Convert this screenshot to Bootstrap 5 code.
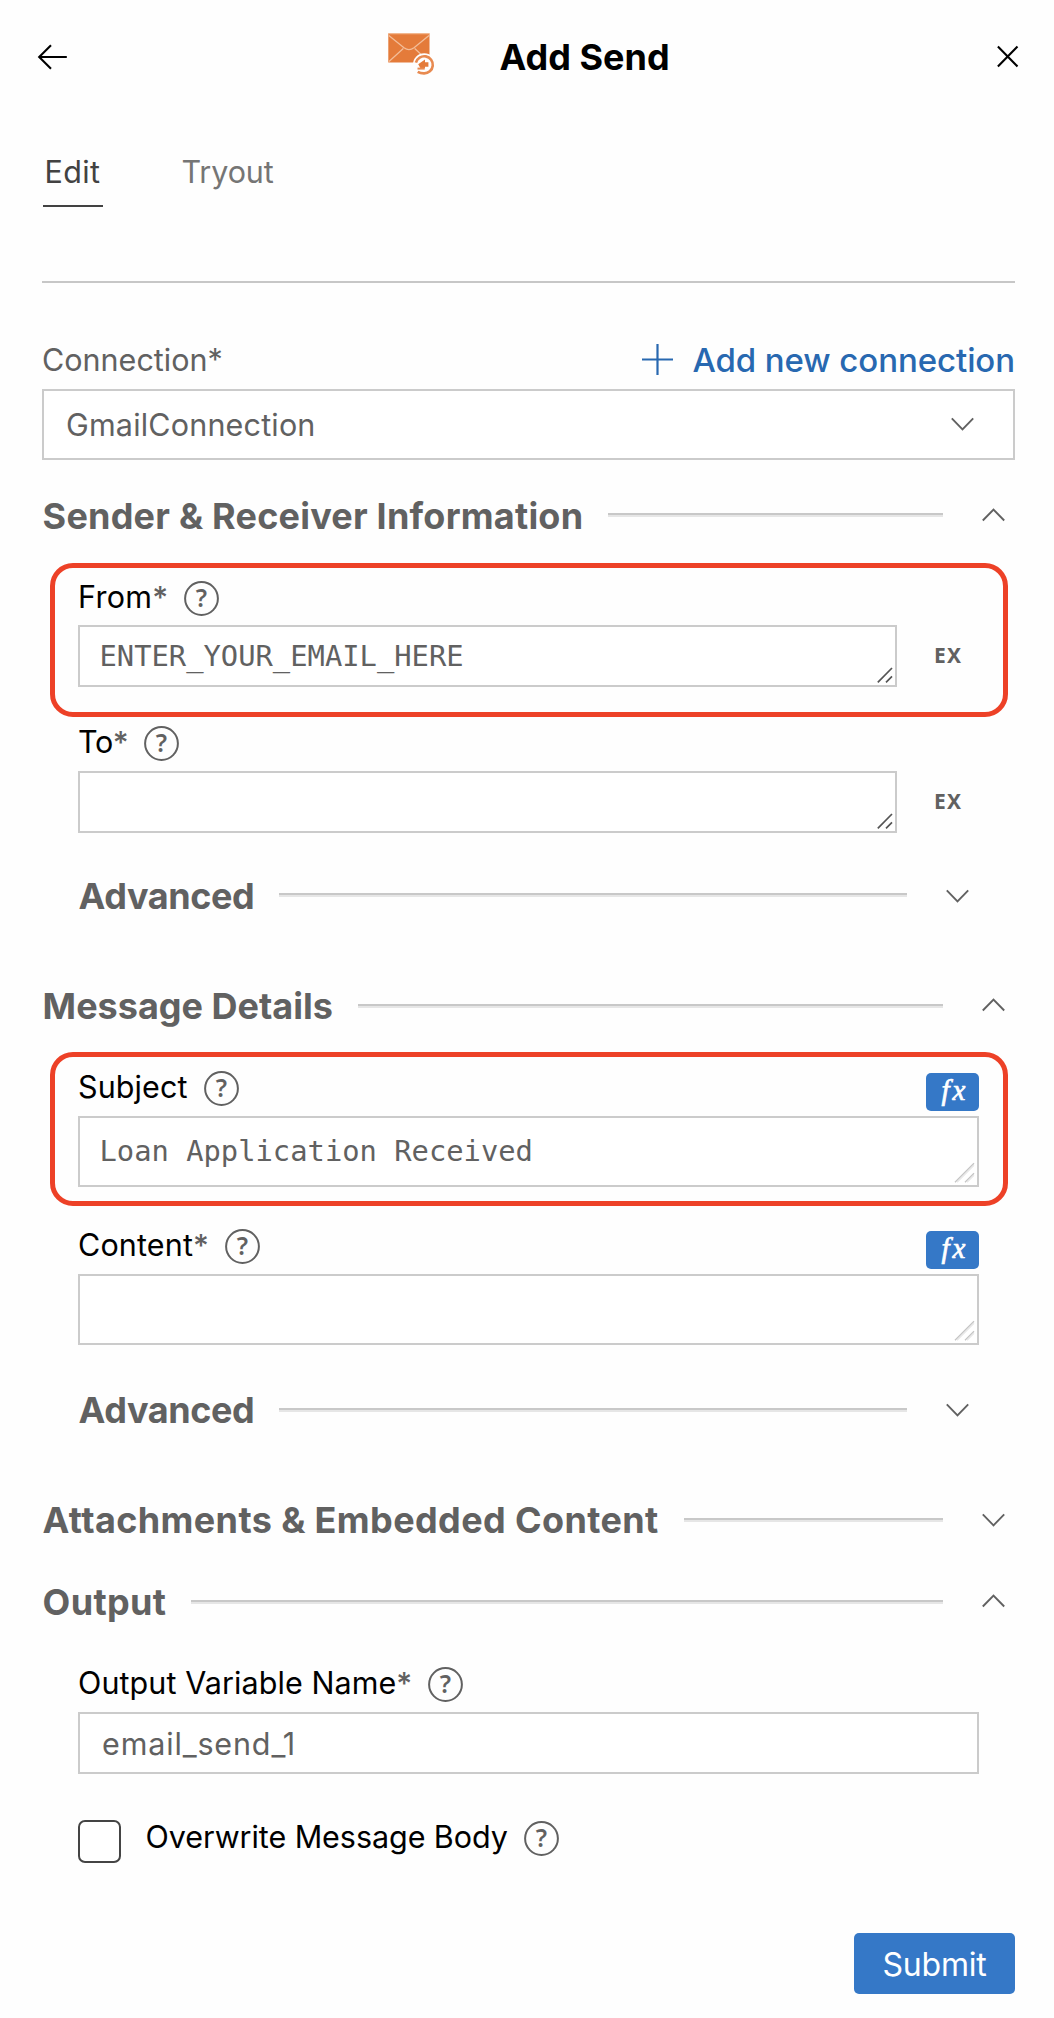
<!DOCTYPE html>
<html lang="en">
<head>
<meta charset="utf-8">
<meta name="viewport" content="width=device-width, initial-scale=1">
<title>Add Send</title>
<link href="https://cdn.jsdelivr.net/npm/bootstrap@5.3.0/dist/css/bootstrap.min.css" rel="stylesheet">
<style>
  body { font-family: Inter, "Liberation Sans", sans-serif; font-size: 30.5px; line-height: 1.2; color: #000; background: #fefefe; }
  svg { display: block; flex: none; overflow: visible; }
  .panel { width: 1054px; height: 2018px; overflow: hidden; }
  .panel-head { height: 114px; padding: 0 36px 0 38px; }
  .panel-title { font-size: 36px; font-weight: 700; margin: 0 0 0 62.5px; padding-top: 2px; }
  .brand { margin-left: 319px; margin-top: -6px; }
  .close-x { margin-bottom: 2px; }
  .tab-row { margin-top: 24px; padding-left: 43px; gap: 77px; }
  .tab-item { height: 69px; border: 0; border-bottom: 2px solid transparent; border-radius: 0; padding: 2px 1.5px 0; color: #757575; letter-spacing: -.1px; display: flex; align-items: center; }
  .tab-item.active { color: #424242; border-color: #424242; letter-spacing: .4px; padding-right: 2.5px; }
  .panel-body { padding: 0 39px 0 42px; }
  .rule { height: 2px; margin-top: 74px; background: #c7c7c7; }
  .muted { color: #616161; }
  .conn-row { height: 58px; margin-top: 48px; }
  .add-link { color: #2868b0; font-size: 33px; font-weight: 500; letter-spacing: -.08px; gap: 19px; }
  .add-link span { padding-top: 2px; }
  .add-link svg { margin-top: -2px; }
  .box { border: 2px solid #cbcbcb; border-radius: 0; background: #fff; color: #616161; height: 71px; padding: 0 22px; display: flex; align-items: center; font-size: inherit; line-height: 1.2; position: relative; }
  .box .plain { padding-top: 2px; letter-spacing: .18px; }
  .box .plain.wide { letter-spacing: .85px; }
  .box.short { height: 62px; }
  .box svg.caret { margin-right: 17px; }
  .mono { font-family: "DejaVu Sans Mono", monospace; font-size: 28.8px; padding: 0 19.5px; }
  .grip { position: absolute; right: 1px; bottom: 1px; }
  .sec { height: 60px; padding-right: 10px; }
  .sec h2 { font-size: 36px; font-weight: 700; color: #616161; margin: 0; padding: 2px 0 0 .6px; white-space: nowrap; }
  .sec .ln { height: 4px; margin: 0 39px 2px 25px; background: linear-gradient(#c8c8c8 50%, #e6e6e6 50%); }
  .sec .ln.mid { margin-bottom: 0; }
  .inner { padding: 0 36px; }
  .lbl { height: 58px; }
  .lbl .q, .check-row .q { margin-left: 16.5px; margin-top: 2px; }
  .lbl .star + .q { margin-left: 15.5px; }
  .star { color: #616161; font-weight: 500; }
  .ex { width: 82px; padding: 0 0 2px 37px; color: #616161; font: 700 21px/1 "Noto Sans", sans-serif; letter-spacing: 1.2px; }
  .fx { width: 53px; height: 38px; margin-bottom: 5px; border-radius: 5px; background: #3578c7; align-self: flex-end; }
  .marked { position: relative; }
  .marked::after { content: ""; position: absolute; top: -6px; left: -28px; width: 958px; height: 154px; border: 5px solid #ed4127; border-radius: 23px; pointer-events: none; }
  .check-row { margin-top: 46px; height: 43px; }
  .tick { width: 43px; height: 43px; border: 2px solid #444; border-radius: 7px; background: #fff; }
  .check-row .txt { margin-left: 24.5px; line-height: 34px; letter-spacing: -.06px; }
  .submit { width: 161px; height: 61px; margin-top: 70px; padding: 2px 0 0; background: #3578c7; border: 0; border-radius: 5px; color: #fff; font-size: 32px; letter-spacing: -.2px; }
</style>
</head>
<body>
<svg width="0" height="0" class="position-absolute">
  <defs>
    <symbol id="down" viewBox="0 0 23 23"><path d="M.8 5.3l10.7 11L22.2 5.3" fill="none" stroke="#616161" stroke-width="1.9"/></symbol>
    <symbol id="up" viewBox="0 0 23 23"><path d="M.8 15.5l10.7-11 10.7 11" fill="none" stroke="#616161" stroke-width="1.9"/></symbol>
    <symbol id="help" viewBox="0 0 35 35"><circle cx="17.5" cy="17.5" r="16.4" fill="none" stroke="#616161" stroke-width="2"/><text x="17.5" y="26.3" text-anchor="middle" font-family="Noto Sans, sans-serif" font-weight="600" font-size="24.5" fill="#616161">?</text></symbol>
    <symbol id="func" viewBox="0 0 53 38"><text x="15.5" y="27" font-family="Liberation Serif, serif" font-style="italic" font-size="29" letter-spacing="3" fill="#fff" stroke="#fff" stroke-width=".7">fx</text></symbol>
    <symbol id="gripdark" viewBox="0 0 17 17"><path d="M.8 15.4L15 1M9 15.4l6-6" fill="none" stroke="#555" stroke-width="1.7"/></symbol>
    <symbol id="griplight" viewBox="0 0 22 22"><path d="M1 20.2L20 1.2M11 20.2l9-9" fill="none" stroke="#c4c4c4" stroke-width="1.3"/><path d="M3 20.2l17-17M13 20.2l7-7" fill="none" stroke="#e9e9e9" stroke-width="1.4"/></symbol>
  </defs>
</svg>
<main class="panel">
  <header class="panel-head d-flex align-items-center">
    <svg width="30" height="26" viewBox="0 0 30 26"><path d="M28.8 13H1.3M13 1.2L1.2 13 13 24.8" fill="none" stroke="#000" stroke-width="2.1"/></svg>
    <svg class="brand" width="50" height="50" viewBox="0 0 50 50">
      <path d="M1.3 4.4h41.2v29H1.3z" fill="#e47b3a"/>
      <path d="M1.3 4.6h41.2" stroke="#f2b78f" stroke-width="1.4"/>
      <path d="M1.8 6.5L17 18.8q5 3.6 10 0L42 6.5M2 32.5L16.3 19.5M40 31L27.7 19.5" fill="none" stroke="#f3bd98" stroke-width="1.3"/>
      <circle cx="37.2" cy="35.4" r="11.2" fill="#fefefe"/>
      <path d="M28.9 33.6a8.6 8.6 0 1 1 8 10.8c-2.4 0-4.3-.5-6.2-1.6" fill="none" stroke="#e88a50" stroke-width="2.6"/>
      <path d="M31.2 35.2l6.8-4.8v2.8h3.4v4.6h-3.4v1.4h-4.5z" fill="#e47b3a"/>
      <path d="M30.5 39.6h7.2" stroke="#e88a50" stroke-width="2"/>
    </svg>
    <h1 class="panel-title">Add Send</h1>
    <svg class="close-x ms-auto" width="21" height="21" viewBox="0 0 21 21"><path d="M.9.4l19.6 20M20.5.4L.9 20.4" fill="none" stroke="#000" stroke-width="2.1"/></svg>
  </header>

  <nav class="nav tab-row">
    <a class="tab-item active text-decoration-none">Edit</a>
    <a class="tab-item text-decoration-none">Tryout</a>
  </nav>

  <div class="panel-body">
    <div class="rule"></div>

    <div class="conn-row d-flex align-items-center justify-content-between">
      <span class="muted">Connection*</span>
      <a class="add-link d-flex align-items-center text-decoration-none">
        <svg width="31" height="31" viewBox="0 0 31 31"><path d="M15.5 0v31M0 15.5h31" stroke="#2868b0" stroke-width="2.2"/></svg>
        <span>Add new connection</span>
      </a>
    </div>
    <div class="box justify-content-between">
      <span class="plain">GmailConnection</span>
      <svg width="23" height="23" class="caret"><use href="#down"/></svg>
    </div>

    <section>
      <div class="sec d-flex align-items-center" style="margin-top:26px"><h2 style="letter-spacing:.22px">Sender &amp; Receiver Information</h2><div class="ln flex-grow-1"></div><svg width="23" height="23"><use href="#up"/></svg></div>
      <div class="inner">
        <div class="marked" style="margin-top:23px">
          <div class="lbl d-flex align-items-center" style="height:56px"><span style="letter-spacing:.3px">From</span><span class="star">*</span><svg class="q" width="35" height="35"><use href="#help"/></svg></div>
          <div class="d-flex align-items-center">
            <div class="box short mono flex-grow-1"><span>ENTER_YOUR_EMAIL_HERE</span><svg class="grip" width="17" height="17"><use href="#gripdark"/></svg></div>
            <span class="ex">EX</span>
          </div>
        </div>
        <div class="lbl d-flex align-items-center" style="margin-top:26px"><span style="letter-spacing:-.4px">To</span><span class="star">*</span><svg class="q" width="35" height="35"><use href="#help"/></svg></div>
        <div class="d-flex align-items-center">
          <div class="box short mono flex-grow-1"><svg class="grip" width="17" height="17"><use href="#gripdark"/></svg></div>
          <span class="ex">EX</span>
        </div>
        <div class="sec d-flex align-items-center" style="margin-top:33px"><h2 style="letter-spacing:-.4px">Advanced</h2><div class="ln flex-grow-1"></div><svg width="23" height="23"><use href="#down"/></svg></div>
      </div>
    </section>

    <section>
      <div class="sec d-flex align-items-center" style="margin-top:50px"><h2>Message Details</h2><div class="ln mid flex-grow-1"></div><svg width="23" height="23"><use href="#up"/></svg></div>
      <div class="inner">
        <div class="marked" style="margin-top:22px">
          <div class="lbl d-flex align-items-center"><span style="letter-spacing:.1px">Subject</span><svg class="q" width="35" height="35"><use href="#help"/></svg><span class="fx ms-auto"><svg width="53" height="38"><use href="#func"/></svg></span></div>
          <div class="box mono"><span>Loan Application Received</span><svg class="grip" width="22" height="22"><use href="#griplight"/></svg></div>
        </div>
        <div class="lbl d-flex align-items-center" style="margin-top:29px"><span style="letter-spacing:.15px">Content</span><span class="star">*</span><svg class="q" width="35" height="35"><use href="#help"/></svg><span class="fx ms-auto"><svg width="53" height="38"><use href="#func"/></svg></span></div>
        <div class="box mono"><svg class="grip" width="22" height="22"><use href="#griplight"/></svg></div>
        <div class="sec d-flex align-items-center" style="margin-top:35px"><h2 style="letter-spacing:-.4px">Advanced</h2><div class="ln mid flex-grow-1"></div><svg width="23" height="23"><use href="#down"/></svg></div>
      </div>
    </section>

    <div class="sec d-flex align-items-center" style="margin-top:50px"><h2 style="letter-spacing:.38px">Attachments &amp; Embedded Content</h2><div class="ln mid flex-grow-1"></div><svg width="23" height="23"><use href="#down"/></svg></div>

    <section>
      <div class="sec d-flex align-items-center" style="margin-top:22px"><h2 style="letter-spacing:.35px">Output</h2><div class="ln mid flex-grow-1"></div><svg width="23" height="23"><use href="#up"/></svg></div>
      <div class="inner">
        <div class="lbl d-flex align-items-center" style="margin-top:22px"><span style="letter-spacing:.08px">Output Variable Name</span><span class="star">*</span><svg class="q" width="35" height="35"><use href="#help"/></svg></div>
        <div class="box short"><span class="plain wide">email_send_1</span></div>
        <div class="check-row d-flex align-items-start"><span class="tick"></span><span class="txt">Overwrite Message Body</span><svg class="q" width="35" height="35" style="margin-top:1px"><use href="#help"/></svg></div>
      </div>
    </section>

    <div class="d-flex justify-content-end"><button type="button" class="btn submit">Submit</button></div>
  </div>
</main>
<script src="https://cdn.jsdelivr.net/npm/bootstrap@5.3.0/dist/js/bootstrap.bundle.min.js"></script>
</body>
</html>
